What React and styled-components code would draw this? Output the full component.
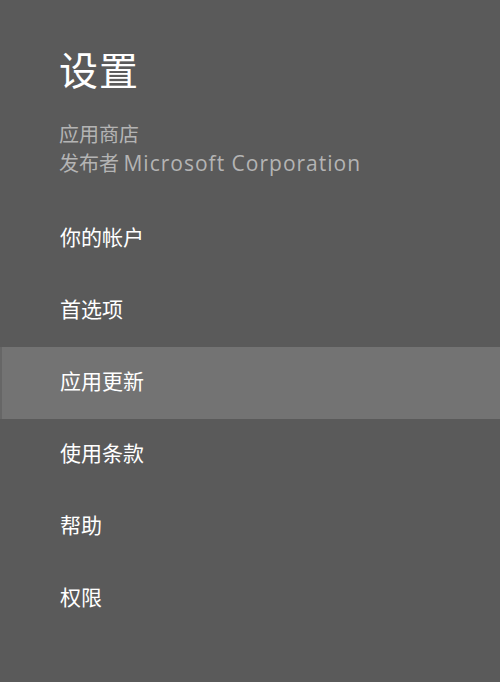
import React from "react";
import styled, { createGlobalStyle } from "styled-components";

const GlobalStyle = createGlobalStyle`
  *, *::before, *::after {
    box-sizing: border-box;
  }
  html, body {
    margin: 0;
    padding: 0;
    background: #5a5a5a;
  }
  body {
    font-family: "Noto Sans CJK SC", "Open Sans", sans-serif;
  }
`;

const Panel = styled.div`
  width: 500px;
  height: 682px;
  background: #5a5a5a;
  display: flex;
  flex-direction: column;
  overflow: hidden;
`;

const Header = styled.div`
  padding: 43px 0 0 59px;
  display: flex;
  flex-direction: column;
`;

const Title = styled.div`
  font-size: 39px;
  line-height: 50px;
  color: #ffffff;
  letter-spacing: 1px;
`;

const Info = styled.div`
  margin-top: 26px;
  display: flex;
  flex-direction: column;
  color: #b4b4b4;
  font-size: 20px;
  line-height: 29px;
`;

const Latin = styled.span`
  font-family: "Open Sans", "Noto Sans", sans-serif;
  font-size: 21px;
  letter-spacing: 1px;
`;

const Menu = styled.div`
  margin-top: 25px;
  display: flex;
  flex-direction: column;
`;

const Item = styled.div`
  height: 72px;
  display: flex;
  align-items: center;
  padding: 0 0 7px ${(p) => (p.$active ? "58px" : "60px")};
  border-left: ${(p) => (p.$active ? "2px solid #666666" : "none")};
  background: ${(p) => (p.$active ? "#737373" : "transparent")};
  color: #ffffff;
  font-size: 21px;
`;

const items = ["你的帐户", "首选项", "应用更新", "使用条款", "帮助", "权限"];

const App = () => {
  return (
    <Panel>
      <GlobalStyle />
      <Header>
        <Title>设置</Title>
        <Info>
          <span>应用商店</span>
          <span>
            发布者 <Latin>Microsoft Corporation</Latin>
          </span>
        </Info>
      </Header>
      <Menu>
        {items.map((label) => (
          <Item key={label} $active={label === "应用更新"}>
            {label}
          </Item>
        ))}
      </Menu>
    </Panel>
  );
};

export default App;
